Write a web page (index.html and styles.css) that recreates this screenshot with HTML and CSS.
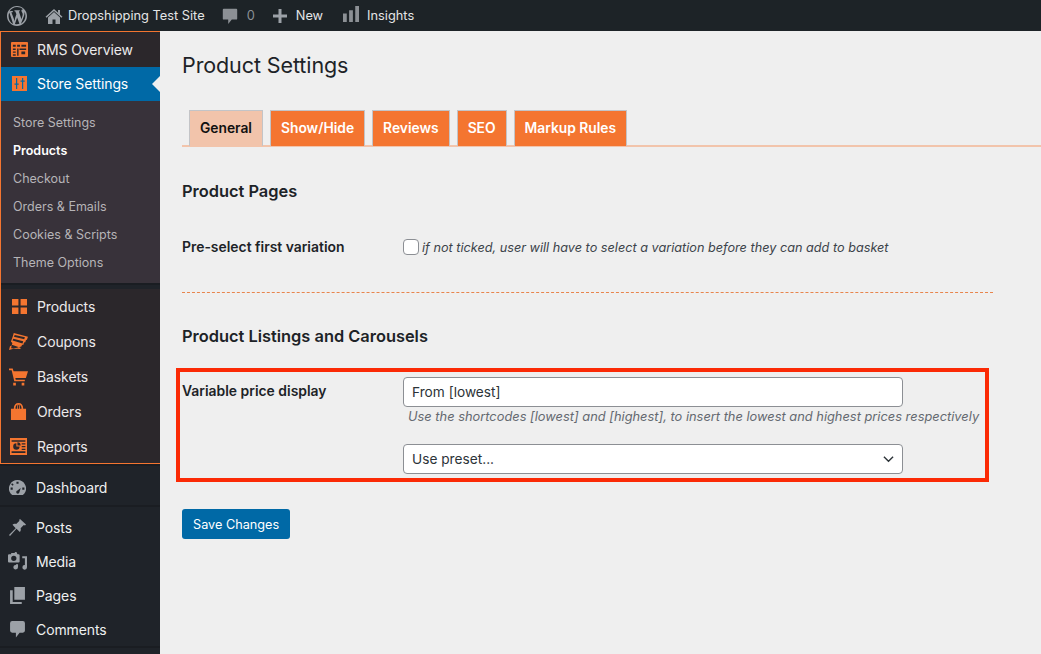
FILE: index.html
```html
<!DOCTYPE html>
<html lang="en">
<head>
<meta charset="utf-8">
<title>Product Settings</title>
<link rel="stylesheet" href="styles.css">
</head>
<body>
<header class="adminbar">
  <svg class="bar-logo" viewBox="0 0 20 20"><path d="M20 10c0-5.510-4.490-10-10-10C4.480 0 0 4.490 0 10c0 5.520 4.480 10 10 10 5.510 0 10-4.480 10-10zM7.780 15.370L4.370 6.220c.55-.020 1.170-.080 1.170-.080.5-.060.44-1.130-.060-1.110 0 0-1.450.11-2.370.11-.18 0-.37-.010-.58-.010C4.120 2.690 6.890 1.030 10 1.030c2.300 0 4.410.87 6 2.300-.03 0-.060 0-.090 0-.98 0-1.500.84-1.500 1.500 0 .59.34 1.090.71 1.690.28.48.59 1.100.59 1.980 0 .6-.23 1.300-.54 2.270l-.71 2.380-2.570-7.660c.43-.020.68-.13.68-.13.49-.060.44-1.180-.060-1.150 0 0-1.450.11-2.380.11-.88 0-2.360-.11-2.360-.11-.5-.030-.56 1.130-.060 1.150l.66.060 1.030 2.790-1.390 4.150zM16.960 10c.24-.64.74-1.870.43-4.250.7 1.290 1.050 2.710 1.050 4.250 0 3.290-1.730 6.160-4.480 7.750.99-2.640 1.990-5.090 3-7.750zM6.100 18.090C3.120 16.650 1.550 13.520 1.550 10c0-1.290.23-2.460.71-3.540 1.360 3.730 2.710 7.880 3.840 11.630zm4.020-6.710l2.280 6.390c-.75.270-1.570.43-2.400.43-.71 0-1.400-.11-2.050-.3.7-2.090 1.430-4.200 2.170-6.520z"/></svg>
  <span class="bar-item bar-site">
    <svg class="bar-home" viewBox="0 0 20 20"><path d="M16 8.500 10 3 1.500 10.700l1.100 1.100L10 5l7.400 6.800 1.100-1.100-2.500-2.300V4h-2v2.600zM4 11.500V18h4.500v-4.500h3V18H16v-6.500L10 6z"/></svg>
    Dropshipping Test Site
  </span>
  <span class="bar-item bar-comments">
    <svg class="bar-bubble" viewBox="0 0 20 20"><path d="M3 2h14a1 1 0 0 1 1 1v10a1 1 0 0 1-1 1h-5l-4 5v-5H3a1 1 0 0 1-1-1V3a1 1 0 0 1 1-1z"/></svg>
    <span class="bar-count">0</span>
  </span>
  <span class="bar-item bar-new">
    <svg class="bar-plus" viewBox="0 0 14 14"><path d="M5.500 0h3v5.500H14v3H8.500V14h-3V8.500H0v-3h5.500z"/></svg>
    New
  </span>
  <span class="bar-item bar-insights">
    <svg class="bar-chart" viewBox="0 0 17 17"><path d="M0 8h4v9H0zM6.500 4.500h4V17h-4zM13 0h4v17h-4z"/></svg>
    Insights
  </span>
</header>

<div class="layout">
  <nav class="sidebar">
    <div class="rms">
      <a class="menu-item">
        <svg class="icon icon-rms" viewBox="0 0 18 16"><path fill-rule="evenodd" d="M1 0h16a1 1 0 0 1 1 1v14a1 1 0 0 1-1 1H1a1 1 0 0 1-1-1V1a1 1 0 0 1 1-1zm1 3v2h3V3zm4.500 0v2h3V3H6.500zM11 3v2h5V3zM2 7v1.500h3V7zm0 3v1.500h3V10zm0 3v1.500h3V13zm4.500-6v7.500h1.500V7zM9 7v1.500h7V7zm2 3v3h4v-3z"/></svg>
        RMS Overview
      </a>
      <a class="menu-item current">
        <svg class="icon icon-small" viewBox="0 0 15 15"><path fill-rule="evenodd" d="M0 0h15v15H0zM4 2v5.500H2.500v1.200H4V13h1.200V8.700h1.500V7.500H5.200V2zM10 2v2.500H8.500v1.200H10V13h1.200V5.700h1.500V4.500h-1.500V2z"/></svg>
        Store Settings
        <span class="current-arrow"></span>
      </a>
      <ul class="submenu">
        <li>Store Settings</li>
        <li class="sub-active">Products</li>
        <li>Checkout</li>
        <li>Orders &amp; Emails</li>
        <li>Cookies &amp; Scripts</li>
        <li>Theme Options</li>
      </ul>
      <div class="sep"></div>
      <div class="rms-group">
        <a class="menu-item">
          <svg class="icon icon-small" viewBox="0 0 14 14"><path d="M0 0h6v6H0zM8 0h6v6H8zM0 8h6v6H0zM8 8h6v6H8z"/></svg>
          Products
        </a>
        <a class="menu-item">
          <svg class="icon icon-wide" viewBox="0 0 20 19"><path fill-rule="evenodd" d="M5 0l15 4-1.200 3.300L18 7l-1 3-1-.3-1 3-1.200-.4-.8 2L0 18l1-4 2-1 .5-2.500L2 9l1.300-3.500L4 3.500zm1 2L5.200 4l10.800 2.700.8-2.200zM4.500 6l-.8 2 10.500 3 .8-2.300zM3 12.500l-.8 3.500 10 1-.2-1.500z"/></svg>
          Coupons
        </a>
        <a class="menu-item">
          <svg class="icon icon-wide" viewBox="0 0 18 16"><path d="M0 0h3.500l.8 2.500H18l-2 6.500H6l.4 1.500H15V12H5L2.500 1.500H0zM4 13.500h2.500V16H4zM12 13.500h2.500V16H12z"/></svg>
          Baskets
        </a>
        <a class="menu-item">
          <svg class="icon" viewBox="0 0 16 18"><path fill-rule="evenodd" d="M3 6C3 2 5 0 8 0s5 2 5 6h3v12H0V6zm1.800 0H6.500C6.500 3.500 6.700 2 7.300 1.500 5.500 2 4.800 3.500 4.800 6zm2.500 0h1.400c0-2.500-.2-3.800-.7-4.500-.5.700-.7 2-.7 4.500zm2.200 0h1.700c0-2.500-.700-4-2.500-4.500.6.500.8 2 .8 4.500z"/></svg>
          Orders
        </a>
        <a class="menu-item item-last">
          <svg class="icon" viewBox="0 0 16 16"><path fill-rule="evenodd" d="M0 0h16v16H0zM1.500 2v1.500h13V2zm0 12h13v-1.500h-13zM6 5a3 3 0 1 0 3 3H6zm1 -1v3h3a3 3 0 0 0-3-3zm4 1v1.200h3.500V5zm0 2.500v1.200h3.500V7.500zm0 2.500v1.200h3.500V10z"/></svg>
          Reports
        </a>
      </div>
    </div>
    <div class="sep"></div>
    <a class="menu-item wp-item wp-dash">
      <svg class="icon" viewBox="0 0 16 14"><path fill-rule="evenodd" d="M8 0a8 8 0 0 1 6.500 12.700L13 14H3l-1.500-1.300A8 8 0 0 1 8 0zM7 1.500v2h2v-2zM3 3l-1 1 1.400 1.400 1-1zM11 7.500l-3 2.300a1.500 1.500 0 1 0 1.800 1.700zM1.500 7v2h2V7zm11 0v2h2V7z"/></svg>
      Dashboard
    </a>
    <div class="sep sep-thin"></div>
    <a class="menu-item wp-item">
      <svg class="icon" viewBox="0 0 17 17"><path d="M11 0l6 5.500-1 1-1.200-.4-3.200 3.200c.5 1.500.2 2.700-.8 3.700L7.500 9.800 1 17l-1-1 6.700-6.800L3.500 5.700c1-1 2.200-1.200 3.700-.7l3.300-3.300-.4-.8z"/></svg>
      Posts
    </a>
    <a class="menu-item wp-item">
      <svg class="icon icon-wide" viewBox="0 0 18 17"><path fill-rule="evenodd" d="M3 1h3l1-1h1l1 2h1a1 1 0 0 1 1 1v6a1 1 0 0 1-1 1H1a1 1 0 0 1-1-1V3a1 1 0 0 1 1-1h2zM5.500 3.500a2.500 2.500 0 1 0 0 5 2.500 2.500 0 0 0 0-5zM18 4v10.500a2.200 2.200 0 1 1-2-2.200V6h-2.500V4zM9.500 11.500v2.800a2.200 2.200 0 1 1-2-2.100V11.500z"/></svg>
      Media
    </a>
    <a class="menu-item wp-item">
      <svg class="icon" viewBox="0 0 14 16"><path d="M4 0h10v12H4zM0 3h2.500v11H11v2H0z"/></svg>
      Pages
    </a>
    <a class="menu-item wp-item">
      <svg class="icon" viewBox="0 0 14 16"><path d="M2 0h10a2 2 0 0 1 2 2v7a2 2 0 0 1-2 2H9l-3.500 4.500V11H2a2 2 0 0 1-2-2V2a2 2 0 0 1 2-2z"/></svg>
      Comments
    </a>
    <div class="sep sep-thin"></div>
  </nav>

  <main class="content">
    <h1 class="page-title">Product Settings</h1>
    <div class="tabs">
      <a class="tab tab-active">General</a>
      <a class="tab">Show/Hide</a>
      <a class="tab">Reviews</a>
      <a class="tab">SEO</a>
      <a class="tab">Markup Rules</a>
    </div>

    <section class="section-pages">
      <h2 class="section-title">Product Pages</h2>
      <div class="field-row row-check">
        <div class="field-label">Pre-select first variation</div>
        <div class="field-control check-control">
          <span class="checkbox"></span>
          <em class="check-note">if not ticked, user will have to select a variation before they can add to basket</em>
        </div>
      </div>
    </section>

    <hr class="divider">

    <section class="section-listings">
      <h2 class="section-title">Product Listings and Carousels</h2>
      <div class="highlight">
        <div class="field-row">
          <div class="field-label label-price">Variable price display</div>
          <div class="field-control">
            <div class="input">From [lowest]</div>
            <p class="hint">Use the shortcodes [lowest] and [highest], to insert the lowest and highest prices respectively</p>
            <div class="input select">
              Use preset...
              <svg class="chevron" viewBox="0 0 12 8"><path d="M1 1.500l5 5 5-5" fill="none" stroke="#2c3338" stroke-width="1.500"/></svg>
            </div>
          </div>
        </div>
      </div>
    </section>

    <a class="save">Save Changes</a>
  </main>
</div>
</body>
</html>
```
FILE: styles.css
```css
* { box-sizing: border-box; }
html, body { margin: 0; padding: 0; height: 654px; overflow: hidden; }
body {
  font-family: Inter, "Liberation Sans", sans-serif;
  font-size: 13px;
  color: #2c3338;
  background: #efefef;
}

.adminbar {
  display: flex;
  align-items: center;
  height: 31px;
  background: #1d2327;
  color: #e4e5e6;
  font-size: 12.800px;
}
.bar-logo { width: 20px; height: 20px; margin-left: 7px; fill: #9ca1a7; }
.bar-item { display: flex; align-items: center; }
.bar-site { margin-left: 17px; }
.bar-home { width: 20px; height: 20px; margin-right: 4px; fill: #9ca1a7; }
.bar-comments { margin-left: 16px; }
.bar-bubble { width: 18px; height: 18px; fill: #8c9095; }
.bar-count { margin-left: 8px; color: #8c9095; }
.bar-new { margin-left: 18px; }
.bar-plus { width: 14px; height: 14px; margin-right: 9px; fill: #9ca1a7; }
.bar-insights { margin-left: 20px; }
.bar-chart { width: 16px; height: 16px; margin-right: 8px; margin-top: -4px; fill: #8c9095; }

.layout { display: flex; height: 623px; }

.sidebar {
  flex: 0 0 160px;
  background: #1f2329;
  color: #f0f0f1;
  font-size: 14px;
  overflow: hidden;
}
.rms {
  border: 1px solid #f47530;
  border-right: 0;
  background: #2b272b;
}
.menu-item {
  display: flex;
  align-items: center;
  height: 35px;
  padding-left: 9px;
  position: relative;
  color: #eceaeb;
  letter-spacing: -0.1px;
}
.item-last { height: 34px; }
.rms .icon { fill: #f47530; }
.icon {
  width: 17px;
  height: 17px;
  margin-right: 10px;
  flex: none;
  fill: #9ca1a7;
}
.icon-rms { margin-left: 1px; margin-right: 9px; }
.icon-small { width: 15px; height: 15px; margin-left: 2px; margin-right: 10px; }
.icon-wide { width: 19px; height: 18px; margin-left: -1px; margin-right: 9px; }

.current { background: #0069a6; color: #fff; height: 34px; padding-bottom: 1px; }
.current-arrow {
  position: absolute;
  right: 0;
  top: 9px;
  border: 8px solid transparent;
  border-right-color: #efefef;
  border-left: 0;
}

.submenu {
  list-style: none;
  margin: 0;
  padding: 8px 0 6px;
  background: #38323a;
  font-size: 12.500px;
  color: #b6b4b7;
}
.submenu li { height: 28px; line-height: 28px; padding-left: 12px; }
.sub-active { color: #fff; font-weight: 600; }

.sep { height: 6px; background: #1f2329; border-top: 2px solid #1a1d22; }
.sep-thin { height: 5px; }
.wp-item { height: 34px; padding-left: 9px; color: #eef0f0; }
.wp-dash { height: 35px; }

.content { flex: 1; padding: 0 0 0 22px; min-width: 0; }
.page-title {
  margin: 0;
  padding-top: 21px;
  font-size: 21.500px;
  line-height: 26px;
  font-weight: 400;
  color: #1d2327;
  letter-spacing: -0.1px;
}
.tabs {
  display: flex;
  gap: 7px;
  margin-top: 32px;
  padding-left: 7px;
  height: 37px;
  border-bottom: 2px solid #f2c4ab;
}
.tab {
  display: flex;
  align-items: center;
  height: 36px;
  padding: 0 10px 2px;
  background: #f47530;
  border: 1px solid #c3c4c7;
  border-bottom: 0;
  color: #fff;
  font-size: 13.800px;
  font-weight: 600;
}
.tab-active { background: #f2c4ab; color: #111; }

.section-title {
  margin: 0;
  font-size: 16.400px;
  line-height: 20px;
  font-weight: 600;
  color: #1d2327;
}
.section-pages { padding-top: 34px; }
.field-row { display: flex; }
.row-check { margin-top: 36px; }
.field-label {
  flex: 0 0 221px;
  font-size: 13.900px;
  font-weight: 600;
  line-height: 20px;
  color: #1d2327;
}
.field-control { flex: 1; }
.check-control { display: flex; align-items: center; gap: 3px; }
.checkbox {
  width: 16px;
  height: 16px;
  background: #fff;
  border: 1px solid #8c8f94;
  border-radius: 4px;
  flex: none;
}
.check-note { font-size: 12.700px; color: #3c434a; }

.divider {
  width: 811px;
  margin: 35px 0 0;
  border: 0;
  border-top: 1px dashed #e8854d;
}
.section-listings { padding-top: 33px; }

.highlight {
  width: 813px;
  height: 114px;
  margin: 22px 0 0 -6px;
  padding: 5px 0 0 2px;
  border: 4px solid #fb2a05;
}
.label-price { padding-top: 4px; }
.input {
  width: 500px;
  height: 30px;
  padding: 0 8px;
  display: flex;
  align-items: center;
  justify-content: space-between;
  background: #fff;
  border: 1px solid #8c8f94;
  border-radius: 4px;
  font-size: 13.700px;
  color: #2c3338;
}
.hint {
  margin: 2px 0 19px 5px;
  font-size: 12.850px;
  line-height: 16px;
  font-style: italic;
  color: #646970;
  white-space: nowrap;
}
.chevron { width: 11px; height: 8px; }

.save {
  display: inline-flex;
  align-items: center;
  height: 30px;
  margin-top: 27px;
  padding: 0 11px;
  background: #0069a6;
  border-radius: 3px;
  color: #fff;
  font-size: 12.700px;
}
```
